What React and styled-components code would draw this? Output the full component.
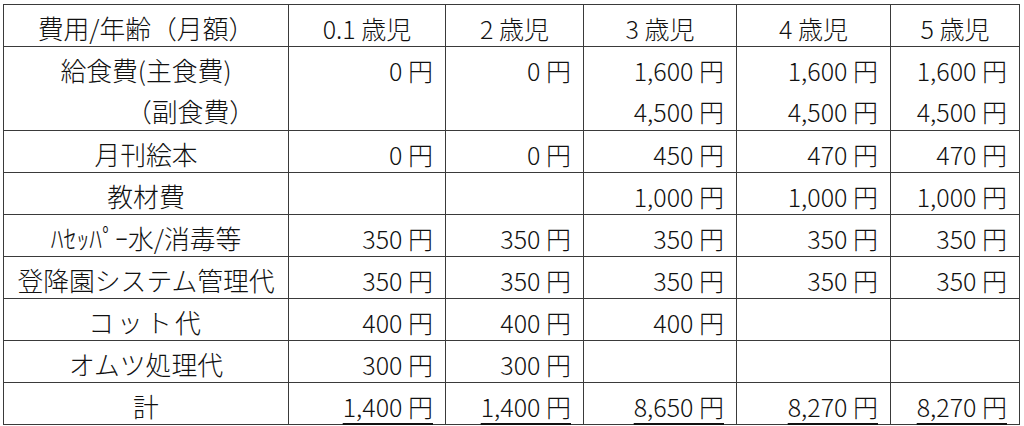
import React from "react";
import styled, { createGlobalStyle } from "styled-components";

const Global = createGlobalStyle`
  html, body { margin: 0; padding: 0; background: #ffffff; }
  body { font-family: "Noto Sans CJK JP", "Noto Sans", sans-serif; color: #111; }
`;

const Page = styled.div`
  padding: 4px 0 0 3px;
  width: 1024px;
  height: 426px;
  box-sizing: border-box;
  overflow: hidden;
`;

const Table = styled.table`
  border-collapse: collapse;
  table-layout: fixed;
  width: 1016px;
  font-size: 25px;
  font-weight: 300;
`;

const Row = styled.tr`
  height: 42px;
`;

const Cell = styled.td`
  border-left: 1px solid #3a3a3a;
  border-right: 1px solid #3a3a3a;
  border-top: ${(p) => (p.$noTop ? "none" : "1px solid #3a3a3a")};
  border-bottom: ${(p) => (p.$noBottom ? "none" : "1px solid #3a3a3a")};
  padding: 4px ${(p) => (p.$align === "right" ? "12px" : "0")} 0
    ${(p) => (p.$indent ? `${p.$indent}px` : "0")};
  text-align: ${(p) => p.$align || "center"};
  vertical-align: middle;
  line-height: 30px;
  white-space: nowrap;
  font-size: ${(p) => (p.$label ? "25.8px" : "25px")};
  letter-spacing: ${(p) => p.$spacing || "0"};
`;

const Total = styled.span`
  text-decoration: underline;
  text-decoration-thickness: 2px;
  text-underline-offset: 6px;
`;

const cols = [285, 157, 138, 153, 154, 129];
const ages = ["0.1 歳児", "2 歳児", "3 歳児", "4 歳児", "5 歳児"];

const rows = [
  { label: "月刊絵本", v: ["0 円", "0 円", "450 円", "470 円", "470 円"] },
  { label: "教材費", v: ["", "", "1,000 円", "1,000 円", "1,000 円"] },
  { label: "ﾊｾｯﾊﾟｰ水/消毒等", v: ["350 円", "350 円", "350 円", "350 円", "350 円"] },
  { label: "登降園システム管理代", v: ["350 円", "350 円", "350 円", "350 円", "350 円"] },
  { label: "コット代", v: ["400 円", "400 円", "400 円", "", ""], spacing: "0.12em" },
  { label: "オムツ処理代", v: ["300 円", "300 円", "", "", ""] },
];

const totals = ["1,400 円", "1,400 円", "8,650 円", "8,270 円", "8,270 円"];

export default function App() {
  return (
    <Page>
      <Global />
      <Table>
        <colgroup>
          {cols.map((w, i) => (
            <col key={i} style={{ width: w }} />
          ))}
        </colgroup>
        <tbody>
          <Row>
            <Cell $label>費用/年齢（月額）</Cell>
            {ages.map((a) => (
              <Cell key={a}>{a}</Cell>
            ))}
          </Row>
          <Row>
            <Cell $label $noBottom>給食費(主食費)</Cell>
            {["0 円", "0 円", "1,600 円", "1,600 円", "1,600 円"].map((v, i) => (
              <Cell key={i} $align="right" $noBottom>
                {v}
              </Cell>
            ))}
          </Row>
          <Row>
            <Cell $label $noTop $align="left" $indent={122}>
              （副食費）
            </Cell>
            {["", "", "4,500 円", "4,500 円", "4,500 円"].map((v, i) => (
              <Cell key={i} $align="right" $noTop>
                {v}
              </Cell>
            ))}
          </Row>
          {rows.map((r) => (
            <Row key={r.label}>
              <Cell $label $spacing={r.spacing}>
                {r.label}
              </Cell>
              {r.v.map((v, i) => (
                <Cell key={i} $align="right">
                  {v}
                </Cell>
              ))}
            </Row>
          ))}
          <Row>
            <Cell $label>計</Cell>
            {totals.map((v, i) => (
              <Cell key={i} $align="right">
                <Total>{v}</Total>
              </Cell>
            ))}
          </Row>
        </tbody>
      </Table>
    </Page>
  );
}
